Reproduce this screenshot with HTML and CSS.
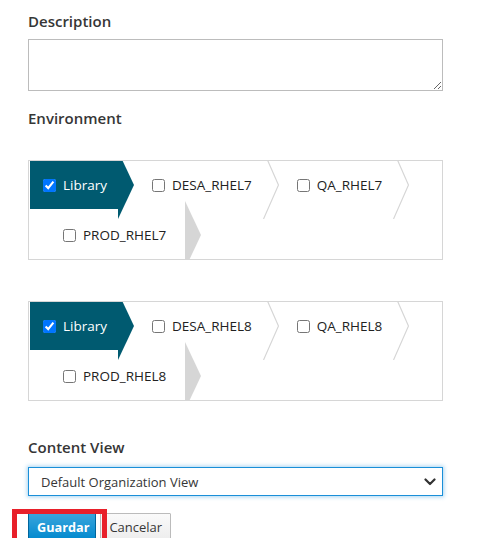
FILE: index.html
```html
<!DOCTYPE html>
<html>
<head>
<meta charset="utf-8">
<link rel="stylesheet" href="styles.css">
</head>
<body>
<form class="form">
  <label class="field-label">Description</label>
  <textarea class="textarea"></textarea>

  <label class="field-label env-label">Environment</label>

  <div class="path-box">
    <ul class="path-list">
      <li class="path-item is-first is-active">
        <input type="checkbox" class="cb" checked><span class="path-text">Library</span>
        <svg class="arrow" width="16" height="68" viewBox="0 0 16 68"><polygon points="0,0 16,34 0,68" fill="#005a70"/></svg>
      </li>
      <li class="path-item">
        <input type="checkbox" class="cb"><span class="path-text">DESA_RHEL7</span>
        <svg class="arrow" width="16" height="68" viewBox="0 0 16 68"><polygon points="0,0 16,34 0,68" fill="#fff"/><polyline points="0.5,0 15.5,34 0.5,68" fill="none" stroke="#d6d6d6" stroke-width="1.2"/></svg>
      </li>
      <li class="path-item">
        <input type="checkbox" class="cb"><span class="path-text">QA_RHEL7</span>
        <svg class="arrow" width="16" height="68" viewBox="0 0 16 68"><polygon points="0,0 16,34 0,68" fill="#fff"/><polyline points="0.5,0 15.5,34 0.5,68" fill="none" stroke="#d6d6d6" stroke-width="1.2"/></svg>
      </li>
      <li class="path-item is-last">
        <input type="checkbox" class="cb"><span class="path-text">PROD_RHEL7</span>
        <svg class="arrow" width="16" height="68" viewBox="0 0 16 68"><polygon points="0,0 16,34 0,68" fill="#d6d6d6"/></svg>
      </li>
    </ul>
  </div>

  <div class="path-box second-box">
    <ul class="path-list">
      <li class="path-item is-first is-active">
        <input type="checkbox" class="cb" checked><span class="path-text">Library</span>
        <svg class="arrow" width="16" height="68" viewBox="0 0 16 68"><polygon points="0,0 16,34 0,68" fill="#005a70"/></svg>
      </li>
      <li class="path-item">
        <input type="checkbox" class="cb"><span class="path-text">DESA_RHEL8</span>
        <svg class="arrow" width="16" height="68" viewBox="0 0 16 68"><polygon points="0,0 16,34 0,68" fill="#fff"/><polyline points="0.5,0 15.5,34 0.5,68" fill="none" stroke="#d6d6d6" stroke-width="1.2"/></svg>
      </li>
      <li class="path-item">
        <input type="checkbox" class="cb"><span class="path-text">QA_RHEL8</span>
        <svg class="arrow" width="16" height="68" viewBox="0 0 16 68"><polygon points="0,0 16,34 0,68" fill="#fff"/><polyline points="0.5,0 15.5,34 0.5,68" fill="none" stroke="#d6d6d6" stroke-width="1.2"/></svg>
      </li>
      <li class="path-item is-last">
        <input type="checkbox" class="cb"><span class="path-text">PROD_RHEL8</span>
        <svg class="arrow" width="16" height="68" viewBox="0 0 16 68"><polygon points="0,0 16,34 0,68" fill="#d6d6d6"/></svg>
      </li>
    </ul>
  </div>

  <label class="field-label cv-label">Content View</label>
  <div class="select">
    <span class="select-text">Default Organization View</span>
    <svg class="select-caret" width="12" height="8" viewBox="0 0 12 8"><polyline points="1.5,1.5 6,6 10.5,1.5" fill="none" stroke="#333" stroke-width="2.2" stroke-linecap="round" stroke-linejoin="round"/></svg>
  </div>

  <div class="buttons">
    <button type="button" class="btn btn-primary">Guardar</button>
    <button type="button" class="btn btn-default">Cancelar</button>
  </div>
  <div class="highlight"></div>
</form>
</body>
</html>
```

FILE: styles.css
```css
* { box-sizing: border-box; }

html, body {
  margin: 0;
  padding: 0;
  background: #fff;
}

body {
  font-family: "Open Sans", "Liberation Sans", sans-serif;
  color: #363636;
  overflow: hidden;
  height: 538px;
}

.form {
  position: relative;
  padding: 11px 0 0 28px;
  width: 443px;
  margin: 0;
}

.field-label {
  display: block;
  font-size: 15px;
  font-weight: 600;
  line-height: 20px;
  color: #363636;
}

.textarea {
  display: block;
  width: 415px;
  height: 52px;
  margin: 8px 0 0 0;
  border: 1px solid #bcbcbc;
  border-radius: 0;
  padding: 4px 6px;
  font-family: inherit;
  font-size: 13px;
  resize: both;
  outline: none;
}

.env-label { margin-top: 17px; }

.path-box {
  margin-top: 32px;
  width: 415px;
  height: 100px;
  border: 1px solid #d6d6d6;
  overflow: hidden;
  background: #fff;
}

.second-box { margin-top: 41px; }

.path-list {
  list-style: none;
  margin: 0;
  padding: 0 0 0 1px;
  display: flex;
  flex-wrap: wrap;
  row-gap: 2px;
}

.path-item {
  position: relative;
  display: flex;
  align-items: center;
  height: 48px;
  padding: 0 11px 0 34px;
  font-size: 13.5px;
  color: #222;
  white-space: nowrap;
}

.path-item.is-first {
  padding-left: 13px;
  padding-right: 11px;
}

.path-item.is-active {
  background: #005a70;
  color: #fff;
}

.path-item.is-last {
  padding-left: 33px;
  padding-right: 19px;
}

.cb {
  width: 13px;
  height: 13px;
  margin: 1px 7px 0 0;
  flex: none;
}

.path-text { line-height: 18px; }

.arrow {
  position: absolute;
  right: -16px;
  top: 50%;
  margin-top: -34px;
  z-index: 1;
  display: block;
}

.cv-label { margin-top: 36px; }

.select {
  margin-top: 10px;
  width: 415px;
  height: 29px;
  border: 1px solid #1a8fd8;
  box-shadow: 0 0 4px 1px rgba(60, 160, 225, 0.45);
  display: flex;
  align-items: center;
  justify-content: space-between;
  padding: 0 6px 0 12px;
  font-size: 13px;
  color: #363636;
  background: #fff;
}

.select-caret { display: block; }

.buttons {
  margin-top: 17px;
  display: flex;
  gap: 4px;
}

.btn {
  height: 28px;
  padding: 0 8px;
  font-family: inherit;
  font-size: 13px;
  line-height: 26px;
  border-radius: 1px;
  margin: 0;
}

.btn-primary {
  padding: 0 6px 0 8px;
  font-size: 12.7px;
  background: linear-gradient(#39a5dc, #0088ce);
  border: 1px solid #00659c;
  color: #fff;
  font-weight: 700;
}

.btn-default {
  background: linear-gradient(#fafafa, #ededed);
  border: 1px solid #bbb;
  color: #363636;
}

.highlight {
  position: absolute;
  left: 12px;
  top: 509px;
  width: 95px;
  height: 40px;
  border: 5px solid #e8202a;
  z-index: 2;
}
```
